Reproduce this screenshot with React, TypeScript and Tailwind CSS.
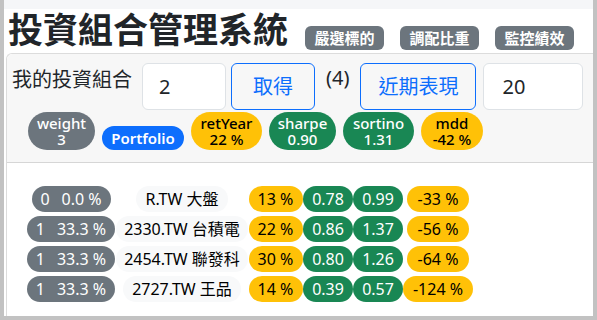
import React from 'react';

const font = { fontFamily: '"Noto Sans", "Noto Sans CJK TC", sans-serif' };

const stats = [
  { label: 'weight', value: '3', cls: 'bg-[#6c757d] text-white w-[67px]' },
  { label: 'retYear', value: '22 %', cls: 'bg-[#ffc107] text-black w-[71px]' },
  { label: 'sharpe', value: '0.90', cls: 'bg-[#198754] text-white w-[67px]' },
  { label: 'sortino', value: '1.31', cls: 'bg-[#198754] text-white w-[71px]' },
  { label: 'mdd', value: '-42 %', cls: 'bg-[#ffc107] text-black w-[62px]' },
];

const rows = [
  { n: '0', w: '0.0 %', wCls: 'w-[79px]', name: 'R.TW 大盤', nameCls: 'w-[92px]', ret: '13 %', sharpe: '0.78', sortino: '0.99', mdd: '-33 %', mddCls: 'w-[62px]' },
  { n: '1', w: '33.3 %', wCls: 'w-[88px]', name: '2330.TW 台積電', nameCls: 'w-[132px]', ret: '22 %', sharpe: '0.86', sortino: '1.37', mdd: '-56 %', mddCls: 'w-[62px]' },
  { n: '1', w: '33.3 %', wCls: 'w-[88px]', name: '2454.TW 聯發科', nameCls: 'w-[132px]', ret: '30 %', sharpe: '0.80', sortino: '1.26', mdd: '-64 %', mddCls: 'w-[62px]' },
  { n: '1', w: '33.3 %', wCls: 'w-[88px]', name: '2727.TW 王品', nameCls: 'w-[118px]', ret: '14 %', sharpe: '0.39', sortino: '0.57', mdd: '-124 %', mddCls: 'w-[70px]' },
];

const pill = 'h-[26px] rounded-full flex items-center justify-center text-[16px] leading-none';

export default function App() {
  return (
    <div
      style={font}
      className="w-[597px] h-[320px] overflow-hidden bg-white border-x-4 border-b-4 border-[#c2c2c2] flex flex-col text-[#212529]"
    >
      {/* top strip */}
      <div className="h-[9px] bg-[#f5f6f8] shrink-0" />

      {/* title row */}
      <div className="h-[44px] shrink-0 flex items-start pl-[4px]">
        <h1 className="mt-[3px] text-[35px] leading-none font-bold text-[#212529]">投資組合管理系統</h1>
        <div className="ml-[17px] mt-[17px] flex gap-[16px]">
          {['嚴選標的', '調配比重', '監控績效'].map((t) => (
            <button
              key={t}
              className="w-[79px] h-[24px] rounded-[6px] bg-[#6c757d] text-white text-[15px] font-semibold leading-none flex items-center justify-center"
            >
              {t}
            </button>
          ))}
        </div>
      </div>

      {/* card */}
      <div className="ml-[2px] flex-1 border-l border-t border-[#dcdcdc] rounded-tl-[6px] flex flex-col">
        <div className="bg-[#f7f7f7] border-b border-[#d6d6d6] pl-[5px] pt-[9px] pb-[12px] rounded-tl-[6px]">
          <div className="flex items-start">
            <span className="text-[20px] leading-[28px] mt-[3px]">我的投資組合</span>
            <div className="ml-[10px] w-[84px] h-[47px] bg-white border border-[#dee2e6] rounded-[6px] pl-[16px] flex items-center text-[20px]">
              2
            </div>
            <button className="ml-[5px] w-[84px] h-[47px] border border-[#0d6efd] rounded-[6px] text-[#0d6efd] text-[20px]">
              取得
            </button>
            <span className="ml-[11px] text-[20px] leading-[28px] mt-[1px]">(4)</span>
            <button className="ml-[11px] w-[116px] h-[47px] border border-[#0d6efd] rounded-[6px] text-[#0d6efd] text-[20px]">
              近期表現
            </button>
            <div className="ml-[7px] w-[100px] h-[47px] bg-white border border-[#dee2e6] rounded-[6px] pl-[18px] flex items-center text-[20px]">
              20
            </div>
          </div>

          <div className="mt-[2px] ml-[16px] flex items-end gap-[7px]">
            <Stat {...stats[0]} />
            <div className="w-[82px] h-[24px] rounded-full bg-[#0d6efd] text-white text-[15px] font-semibold leading-none flex items-center justify-center">
              Portfolio
            </div>
            {stats.slice(1).map((s) => (
              <Stat key={s.label} {...s} />
            ))}
          </div>
        </div>

        <div className="pt-[23px] pl-[19px]">
          <div className="grid grid-cols-[90px_132px_55px_50px_50px_70px] gap-y-[4px] justify-items-center">
            {rows.map((r, i) => (
              <React.Fragment key={i}>
                <div className={`${pill} ${r.wCls} bg-[#6c757d] text-white gap-[12px]`}>
                  <span>{r.n}</span>
                  <span>{r.w}</span>
                </div>
                <div className={`${pill} ${r.nameCls} bg-[#f8f9fa] text-black`}>{r.name}</div>
                <div className={`${pill} w-[54px] bg-[#ffc107] text-black`}>{r.ret}</div>
                <div className={`${pill} w-[50px] bg-[#198754] text-white`}>{r.sharpe}</div>
                <div className={`${pill} w-[50px] bg-[#198754] text-white`}>{r.sortino}</div>
                <div className={`${pill} ${r.mddCls} bg-[#ffc107] text-black`}>{r.mdd}</div>
              </React.Fragment>
            ))}
          </div>
        </div>
      </div>
    </div>
  );
}

function Stat({ label, value, cls }: { label: string; value: string; cls: string }) {
  return (
    <div className={`${cls} h-[38px] rounded-full flex flex-col items-center justify-center text-[15px] leading-[16px] font-medium`}>
      <span>{label}</span>
      <span>{value}</span>
    </div>
  );
}
